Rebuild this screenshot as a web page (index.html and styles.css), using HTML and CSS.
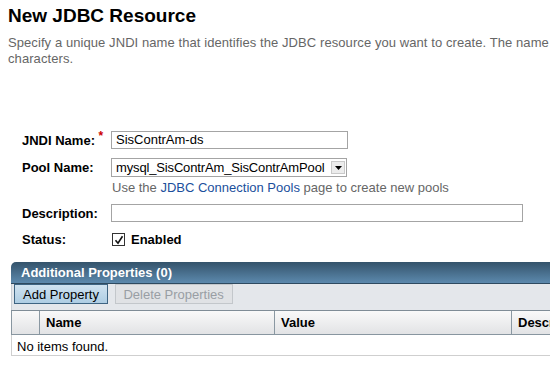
FILE: index.html
```html
<!DOCTYPE html>
<html lang="en">
<head>
    <meta charset="UTF-8">
    <title>New JDBC Resource</title>
    <link rel="stylesheet" href="styles.css">
</head>
<body>
    <div class="page">
        <h1>New JDBC Resource</h1>
        <p class="intro">Specify a unique JNDI name that identifies the JDBC resource you want to create. The name must contain only alphanumeric, underscore, dash, or dot characters.</p>

        <div class="form">
            <div class="row">
                <label class="label">JNDI Name: <span class="req">*</span></label>
                <div class="input short">SisContrAm-ds</div>
            </div>
            <div class="row">
                <label class="label">Pool Name:</label>
                <div class="select">
                    <span class="select-text">mysql_SisContrAm_SisContrAmPool</span>
                    <span class="select-btn">
                        <svg width="7" height="4" viewBox="0 0 7 4"><path d="M0 0h7L3.5 4z" fill="#000"/></svg>
                    </span>
                </div>
            </div>
            <div class="help">Use the <a href="#">JDBC Connection Pools</a> page to create new pools</div>
            <div class="row">
                <label class="label">Description:</label>
                <div class="input long"></div>
            </div>
            <div class="row status">
                <label class="label">Status:</label>
                <span class="check">
                    <svg width="10" height="10" viewBox="0 0 10 10"><path d="M1.5 5.2l2.5 3 4.5-7" fill="none" stroke="#111" stroke-width="1.6"/></svg>
                </span>
                <span class="check-label">Enabled</span>
            </div>
        </div>

        <div class="props">
            <div class="props-title">Additional Properties (0)</div>
            <div class="toolbar">
                <button class="btn primary">Add Property</button>
                <button class="btn disabled">Delete Properties</button>
            </div>
            <div class="thead">
                <div class="th sel"></div>
                <div class="th name">Name</div>
                <div class="th value">Value</div>
                <div class="th descr">Description</div>
            </div>
            <div class="empty">No items found.</div>
        </div>
    </div>
</body>
</html>
```

FILE: styles.css
```css
html, body {
    margin: 0;
    overflow: hidden;
}
body {
    font-family: "Liberation Sans", Arial, sans-serif;
    font-size: 13px;
    color: #000;
    background: #fff;
}
.page {
    width: 920px;
    padding: 5px 0 0 8px;
}
h1 {
    margin: 0;
    font-size: 19px;
    line-height: 22px;
    font-weight: bold;
}
.intro {
    margin: 8px 0 0;
    color: #666;
    line-height: 16px;
    letter-spacing: 0.08px;
    width: 910px;
}
.form {
    margin: 64px 0 0 14px;
}
.row {
    display: flex;
    align-items: center;
}
.label {
    width: 89px;
    font-weight: bold;
}
.req {
    color: #cc0000;
    font-size: 12px;
    vertical-align: top;
    position: relative;
    top: -4px;
}
.input {
    box-sizing: border-box;
    height: 18px;
    border: 1px solid #a4a4a4;
    padding: 0 4px;
    line-height: 16px;
}
.short {
    width: 237px;
}
.long {
    width: 412px;
}
.select {
    box-sizing: border-box;
    width: 236px;
    height: 19px;
    border: 1px solid #a4a4a4;
    display: flex;
    align-items: center;
    padding-left: 4px;
}
.select-text {
    flex: 1;
    letter-spacing: -0.15px;
    white-space: nowrap;
    overflow: hidden;
}
.select-btn {
    width: 12px;
    height: 11px;
    margin: 0 1px 0 4px;
    border: 1px solid #c9c9c9;
    background: #ececec;
    display: flex;
    align-items: center;
    justify-content: center;
}
.help {
    margin: 3px 0 0 90px;
    color: #666;
    line-height: 16px;
}
.help a {
    color: #1b4f9c;
    text-decoration: none;
}
.row + .row {
    margin-top: 9px;
}
.help + .row {
    margin-top: 8px;
}
.row.status {
    margin-top: 10px;
}
.check {
    box-sizing: border-box;
    width: 13px;
    height: 13px;
    margin-left: 1px;
    border: 1px solid #333;
    display: flex;
    align-items: center;
    justify-content: center;
}
.check-label {
    margin-left: 6px;
    font-weight: bold;
}
.props {
    margin: 15px 0 0 3px;
    width: 900px;
}
.props-title {
    height: 21px;
    line-height: 22px;
    padding-left: 10px;
    color: #fff;
    font-weight: bold;
    background: linear-gradient(#34536b, #5c89ad);
    border-bottom: 1px solid #2e4a60;
    border-radius: 5px 0 0 0;
}
.toolbar {
    height: 26px;
    background: #e4e7eb;
    padding-left: 2px;
    border-left: 1px solid #c9ced4;
}
.btn {
    font-family: inherit;
    font-size: 13px;
    height: 20px;
    padding: 0;
    margin: 0;
    white-space: nowrap;
    vertical-align: top;
}
.primary {
    width: 94px;
    margin-right: 3px;
    color: #000;
    background: linear-gradient(#cfe2f0, #aecde3);
    border: 1px solid #3e6482;
}
.disabled {
    width: 118px;
    color: #999ea4;
    background: #e0e2e5;
    border: 1px solid #c3c7cb;
}
.thead {
    display: flex;
    height: 23px;
    border-top: 1px solid #7f8c96;
    border-bottom: 1px solid #8896a0;
    border-left: 1px solid #8896a0;
    background: linear-gradient(#f9f9f9, #e2e3e5);
    font-weight: bold;
    line-height: 24px;
}
.th {
    box-sizing: border-box;
    padding-left: 6px;
    border-right: 1px solid #8a98a2;
}
.sel {
    width: 28px;
}
.name {
    width: 235px;
}
.value {
    width: 237px;
}
.descr {
    flex: 1;
    border-right: none;
}
.empty {
    height: 20px;
    line-height: 23px;
    padding-left: 5px;
    border-left: 1px solid #cfcfcf;
    border-bottom: 1px solid #cfcfcf;
}
```
